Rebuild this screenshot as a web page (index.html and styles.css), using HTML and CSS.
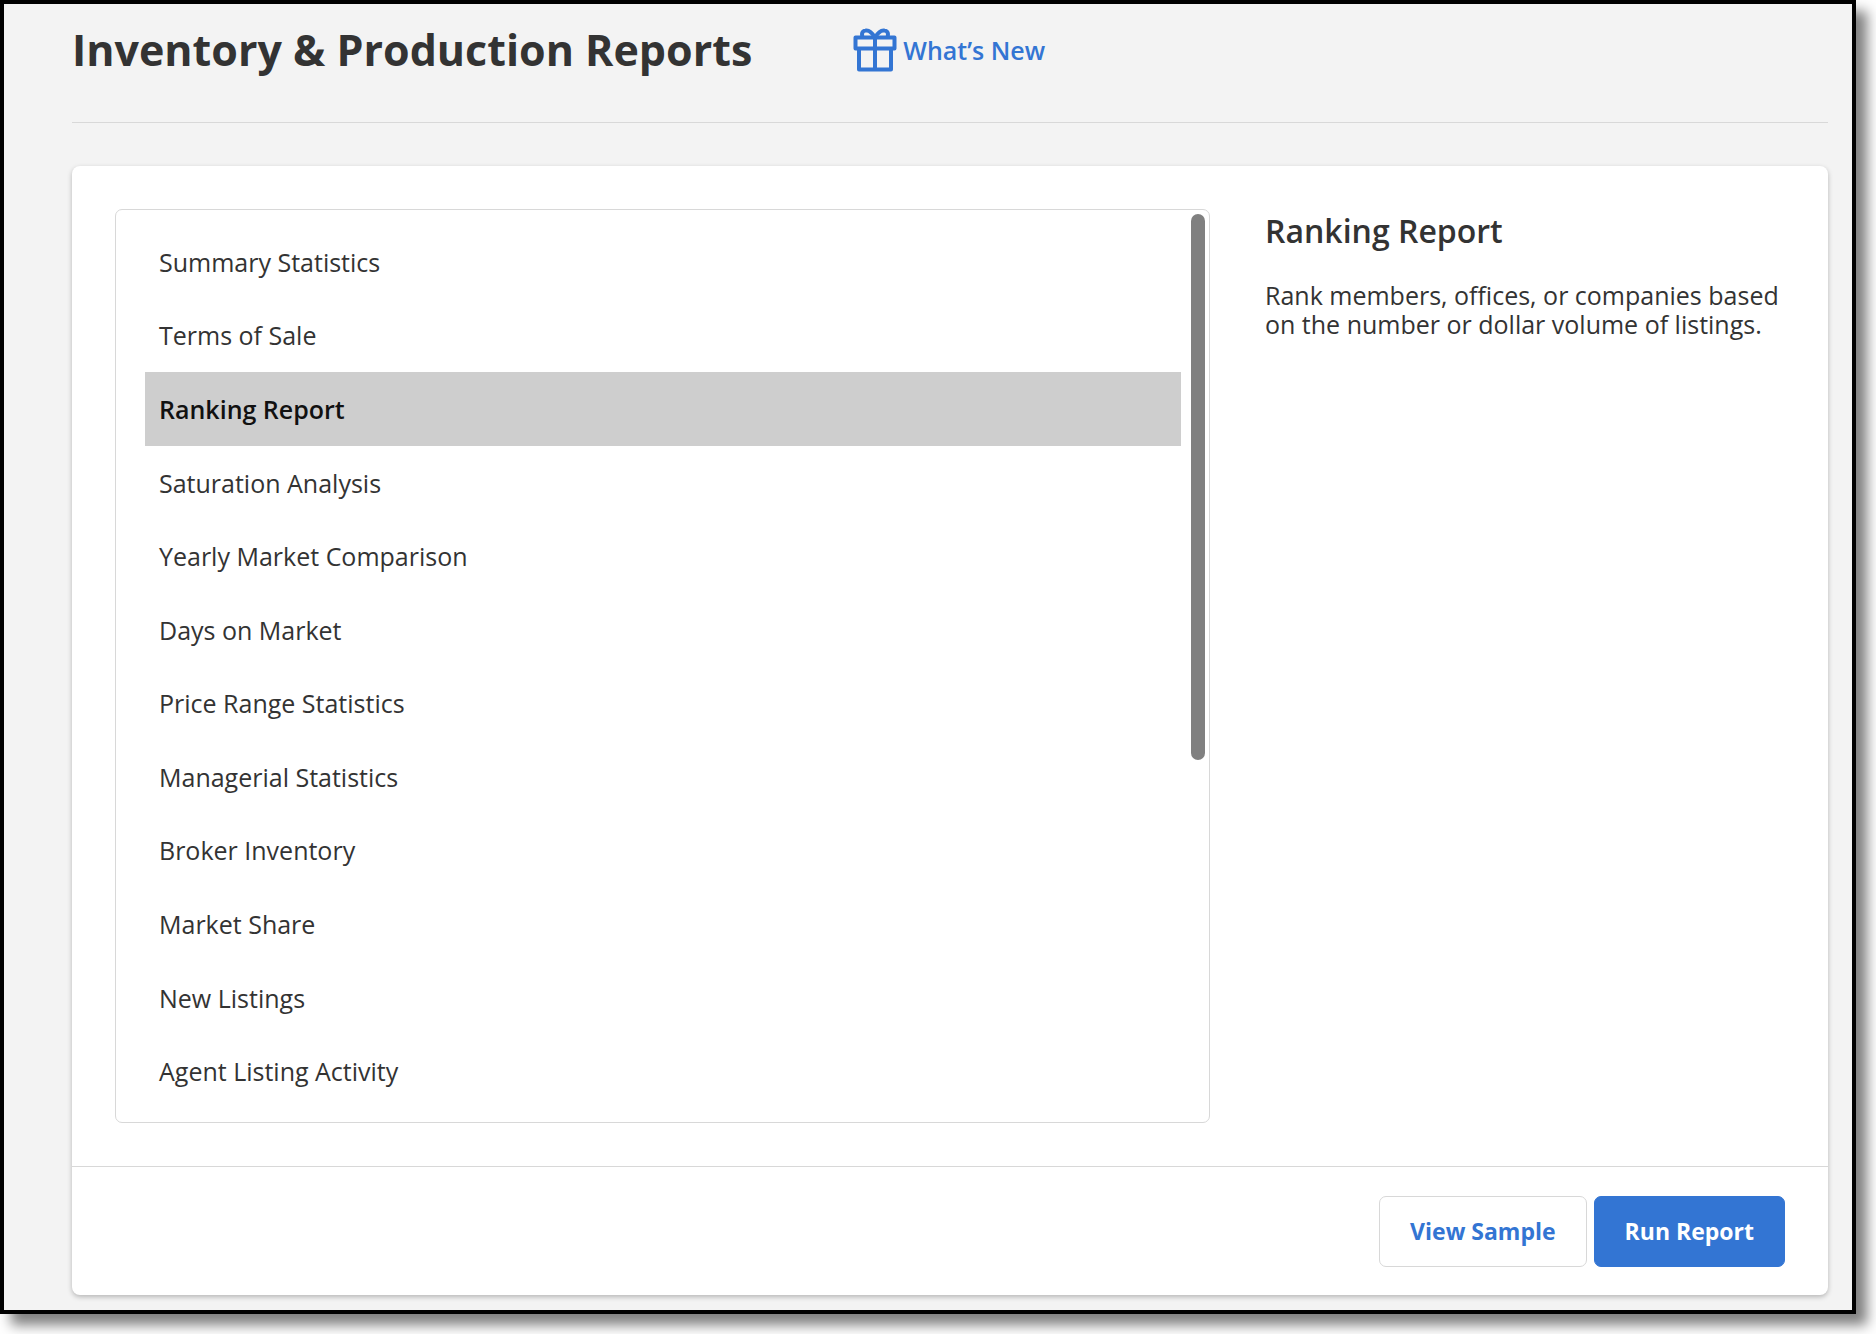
FILE: index.html
```html
<!DOCTYPE html>
<html lang="en">
<head>
<meta charset="utf-8">
<title>Inventory &amp; Production Reports</title>
<link rel="stylesheet" href="styles.css">
</head>
<body>
<main class="frame">
  <header class="page-header">
    <h1 class="page-title">Inventory &amp; Production Reports</h1>
    <a class="whats-new" href="#">
      <svg class="gift" viewBox="0 0 44 44" fill="none" stroke="currentColor" stroke-width="4" stroke-linejoin="round" aria-hidden="true">
        <path d="M2.500 9.500h39v11h-39zM6 20.500h32v21H6zM22 9.500V41.500"/>
        <path d="M21.500 9C19 4.500 15.500 2 12.500 2.500C9 3 8.500 6 9.500 9M22.500 9C25 4.500 28.500 2 31.500 2.500C35 3 35.500 6 34.500 9"/>
      </svg>
      <span>What’s New</span>
    </a>
  </header>
  <section class="card">
    <div class="card-body">
      <div class="list-box">
        <ul class="report-list">
          <li><button class="report" type="button">Summary Statistics</button></li>
          <li><button class="report" type="button">Terms of Sale</button></li>
          <li><button class="report selected" type="button" aria-current="true">Ranking Report</button></li>
          <li><button class="report" type="button">Saturation Analysis</button></li>
          <li><button class="report" type="button">Yearly Market Comparison</button></li>
          <li><button class="report" type="button">Days on Market</button></li>
          <li><button class="report" type="button">Price Range Statistics</button></li>
          <li><button class="report" type="button">Managerial Statistics</button></li>
          <li><button class="report" type="button">Broker Inventory</button></li>
          <li><button class="report" type="button">Market Share</button></li>
          <li><button class="report" type="button">New Listings</button></li>
          <li><button class="report" type="button">Agent Listing Activity</button></li>
        </ul>
        <div class="scroll-track"><div class="scroll-thumb"></div></div>
      </div>
      <aside class="details">
        <h2 class="details-title">Ranking Report</h2>
        <p class="details-text">Rank members, offices, or companies based on the number or dollar volume of listings.</p>
      </aside>
    </div>
    <footer class="card-footer">
      <button class="btn" type="button">View Sample</button>
      <button class="btn btn-primary" type="button">Run Report</button>
    </footer>
  </section>
</main>
</body>
</html>
```
FILE: styles.css
```css
* {
  box-sizing: border-box;
}

body {
  margin: 0;
  background: #fff;
  color: #333;
  font-family: "Open Sans", "Noto Sans", sans-serif;
  font-size: 25px;
}

h1, h2, p, ul {
  margin: 0;
  padding: 0;
}

.frame {
  margin: 0 20px 20px 0;
  padding: 0 24px 15px 68px;
  background: #f3f3f3;
  border: 4px solid #000;
  box-shadow: 11px 11px 12px rgba(0, 0, 0, 0.5);
}

.page-header {
  display: flex;
  align-items: center;
  gap: 101px;
  height: 119px;
  padding-bottom: 26px;
  border-bottom: 1px solid #d8d8d8;
}

.page-title {
  font-size: 43px;
  font-weight: 700;
  line-height: 60px;
}

.whats-new {
  display: flex;
  align-items: center;
  gap: 6px;
  color: #3375d3;
  font-weight: 600;
  line-height: 36px;
  text-decoration: none;
}

.gift {
  width: 44px;
  height: 44px;
}

.card {
  margin-top: 43px;
  background: #fff;
  border-radius: 8px;
  box-shadow: 0 2px 5px rgba(0, 0, 0, 0.25);
}

.card-body {
  display: grid;
  grid-template-columns: 1095fr 520fr;
  gap: 55px;
  padding: 43px;
}

.list-box {
  display: flex;
  min-height: 914px;
  border: 1px solid #d8d8d8;
  border-radius: 7px;
}

.report-list {
  flex: 1;
  display: grid;
  grid-auto-rows: 1fr;
  padding: 15px 10px 14px 29px;
  list-style: none;
}

.report-list li {
  display: flex;
}

.report {
  flex: 1;
  padding: 0 14px;
  border: 0;
  background: none;
  color: inherit;
  font: inherit;
  text-align: left;
}

.report.selected {
  background: #cecece;
  color: #111;
  font-weight: 600;
}

.scroll-track {
  width: 18px;
  padding: 4px 4px 4px 0;
}

.scroll-thumb {
  height: 546px;
  border-radius: 7px;
  background: #808080;
}

.details-title {
  font-size: 32px;
  font-weight: 600;
  line-height: 44px;
}

.details-text {
  margin-top: 28px;
  line-height: 29px;
}

.card-footer {
  display: flex;
  justify-content: flex-end;
  gap: 7px;
  padding: 29px 43px 28px;
  border-top: 1px solid #d8d8d8;
}

.btn {
  height: 71px;
  padding: 0 30px 2px;
  border: 1px solid #d8d8d8;
  border-radius: 7px;
  background: #fff;
  color: #3375d3;
  font: inherit;
  font-size: 23px;
  font-weight: 700;
}

.btn-primary {
  border-color: #3375d3;
  background: #3375d3;
  color: #fff;
}
```
